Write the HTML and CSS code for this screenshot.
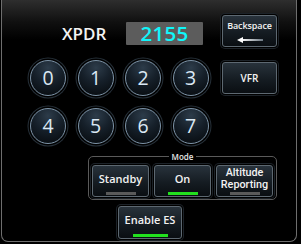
FILE: index.html
```html
<!DOCTYPE html>
<html>
<head>
<meta charset="utf-8">
<link rel="stylesheet" href="styles.css">
</head>
<body>
<div class="panel">
  <div class="top-row">
    <div class="xpdr">XPDR</div>
    <div class="code">2155</div>
    <button class="btn backspace">
      <span class="bs-label">Backspace</span>
      <svg class="arrow" width="26" height="6" viewBox="0 0 26 6">
        <defs>
          <linearGradient id="tail" x1="0" x2="1" y1="0" y2="0">
            <stop offset="0" stop-color="#ffffff"/>
            <stop offset="1" stop-color="#6b7680"/>
          </linearGradient>
        </defs>
        <rect x="4" y="2" width="22" height="2" fill="url(#tail)"/>
        <polygon points="0,3 6,0 6,6" fill="#ffffff"/>
      </svg>
    </button>
  </div>
  <div class="mid-row">
    <div class="keypad">
      <div class="key">0</div>
      <div class="key">1</div>
      <div class="key">2</div>
      <div class="key">3</div>
      <div class="key">4</div>
      <div class="key">5</div>
      <div class="key">6</div>
      <div class="key">7</div>
    </div>
    <button class="btn vfr">VFR</button>
  </div>
  <fieldset class="mode">
    <legend>Mode</legend>
    <button class="btn sel"><span class="lbl">Standby</span><span class="bar"></span></button>
    <button class="btn sel"><span class="lbl">On</span><span class="bar on"></span></button>
    <button class="btn sel"><span class="lbl two"><span class="ln">Altitude</span><span class="ln">Reporting</span></span><span class="bar"></span></button>
  </fieldset>
  <button class="btn sel es"><span class="lbl">Enable ES</span><span class="bar on wide"></span></button>
</div>
</body>
</html>
```
FILE: styles.css
```css
html, body {
  margin: 0;
  padding: 0;
  background: #000;
}
body {
  width: 301px;
  height: 244px;
  overflow: hidden;
  font-family: "Open Sans", "DejaVu Sans", sans-serif;
  color: #f2f2f2;
}
.panel {
  box-sizing: border-box;
  margin-left: 1px;
  width: 296px;
  height: 242px;
  border: 1px solid #6e6e6e;
  border-top: none;
  border-radius: 0 0 7px 7px;
  background: linear-gradient(#2e2e2e 0, #101010 22px, #000 40px);
  padding-top: 15px;
}
.top-row {
  display: flex;
  align-items: flex-start;
  height: 32px;
}
.xpdr {
  margin-left: 60px;
  margin-top: 7px;
  width: 64px;
  height: 23px;
  line-height: 23px;
  font-size: 17px;
  font-weight: 600;
  color: #f4f4f4;
}
.code {
  margin-top: 7px;
  width: 77px;
  height: 23px;
  background: #5c5c5c;
  border-radius: 1px;
  color: #10f6fa;
  font-size: 20.5px;
  font-weight: 600;
  line-height: 23px;
  text-align: center;
  letter-spacing: 0.3px;
}
.btn {
  box-sizing: border-box;
  margin: 0;
  padding: 0;
  border: 1px solid #5d6871;
  border-radius: 3px;
  box-shadow: 0 0 0 1px #000, 0 0 0 2px #1c2228;
  background: linear-gradient(#28323b 0%, #151c22 55%, #0a0e12 100%);
  color: #f2f2f2;
  font-family: "Open Sans", "DejaVu Sans", sans-serif;
  font-weight: 600;
  cursor: default;
}
.backspace {
  margin-left: 19px;
  width: 55px;
  height: 32px;
  display: flex;
  flex-direction: column;
  align-items: center;
  padding-top: 3px;
}
.bs-label {
  font-size: 9px;
  line-height: 13px;
  letter-spacing: -0.1px;
}
.arrow {
  margin-top: 5px;
  display: block;
}
.mid-row {
  display: flex;
  align-items: flex-start;
  margin-top: 13px;
}
.keypad {
  margin-left: 28px;
  display: grid;
  grid-template-columns: repeat(4, 36px);
  grid-auto-rows: 36px;
  column-gap: 11.5px;
  row-gap: 11.5px;
}
.key {
  box-sizing: border-box;
  width: 36px;
  height: 36px;
  border-radius: 50%;
  border: 1.5px solid #7d93a6;
  box-shadow: 0 0 0 1.5px #000, 0 0 0 2.5px #27313a;
  background: radial-gradient(circle at 50% 20%, #2d3c4a 0%, #16202a 45%, #05080b 100%);
  color: #dbe8f4;
  font-size: 19.5px;
  line-height: 33px;
  text-align: center;
  font-weight: 500;
}
.vfr {
  margin-left: 13.5px;
  margin-top: 2px;
  width: 55px;
  height: 32px;
  font-size: 10px;
}
.mode {
  box-sizing: border-box;
  margin: 8px 0 0 86px;
  width: 189px;
  padding: 3px 3px 2px 3px;
  border: 1px solid #5a5a5a;
  border-radius: 5px;
  display: flex;
  gap: 5px;
  min-width: 0;
}
.mode legend {
  margin: 0 auto;
  padding: 0 3px;
  font-size: 8px;
  line-height: 10px;
  color: #e8e8e8;
  font-weight: 600;
}
.sel {
  width: 57px;
  height: 32px;
  display: flex;
  flex-direction: column;
  align-items: center;
  padding-top: 1px;
}
.lbl {
  flex: 1;
  display: flex;
  align-items: center;
  justify-content: center;
  text-align: center;
  font-size: 11px;
  line-height: 12px;
  padding-bottom: 1px;
}
.lbl.two {
  flex-direction: column;
  font-family: Roboto, "Open Sans", sans-serif;
  font-weight: 500;
  font-size: 10.8px;
  padding-bottom: 0;
}
.ln {
  display: block;
  height: 12.6px;
  line-height: 12.6px;
}
.bar {
  width: 30px;
  height: 3px;
  background: #5a5a5a;
  margin-bottom: 1px;
}
.bar.on {
  background: #22e01e;
}
.bar.wide {
  width: 35px;
}
.es {
  margin: 6px 0 0 116px;
  width: 64px;
  height: 33px;
}
```
